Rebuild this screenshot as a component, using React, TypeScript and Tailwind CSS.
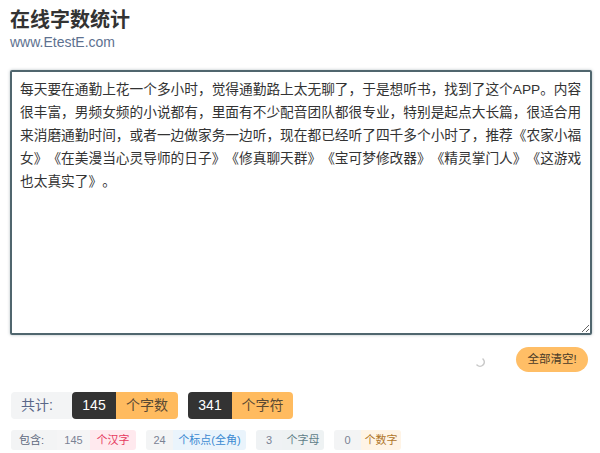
import React from "react";

const text =
  "每天要在通勤上花一个多小时，觉得通勤路上太无聊了，于是想听书，找到了这个APP。内容很丰富，男频女频的小说都有，里面有不少配音团队都很专业，特别是起点大长篇，很适合用来消磨通勤时间，或者一边做家务一边听，现在都已经听了四千多个小时了，推荐《农家小福女》《在美漫当心灵导师的日子》《修真聊天群》《宝可梦修改器》《精灵掌门人》《这游戏也太真实了》。";

export default function App() {
  return (
    <div
      className="w-[600px] h-[453px] bg-white overflow-hidden [text-spacing-trim:space-all]"
      style={{ fontFamily: '"Liberation Sans", "Noto Sans CJK SC", sans-serif' }}
    >
      <div className="pl-[10px] pt-[6px]">
        <h1 className="text-[20px] leading-[28px] font-bold text-[#333]">在线字数统计</h1>
        <div className="text-[14px] leading-[16px] text-[#5d7190]">www.EtestE.com</div>
      </div>
      <div className="pl-[10px] pr-[8px] mt-[20px]">
        <textarea
          className="block w-[582px] h-[265px] border-2 border-[#50666e] rounded-[2px] px-[8px] py-[6px] text-[13.7px] leading-[23px] text-[#333] resize-y shadow-[0_0_3px_rgba(80,102,110,0.45)] outline-none [text-spacing-trim:space-all]"
          defaultValue={text}
        />
      </div>
      <div className="flex items-center justify-end gap-[30px] pr-[12px] mt-[12px]">
        <svg width="12" height="12" viewBox="0 0 12 12" className="mt-[4px]">
          <path d="M9 3 A4 4 0 0 1 3 9" fill="none" stroke="#c8c8c8" strokeWidth="1.6" strokeLinecap="round" />
        </svg>
        <button className="h-[25px] w-[72px] rounded-full bg-[#ffbe66] text-[11.5px] text-[#4a3b28]">
          全部清空!
        </button>
      </div>
      <div className="flex items-center gap-[10px] pl-[11px] mt-[20px] h-[27px] text-[14px]">
        <div className="h-full flex items-center px-[10px] w-[61px] bg-[#f3f4f5] rounded-l-[4px] text-[#5a6888]">共计:</div>
        <div className="flex h-full -ml-[10px] rounded-[4px] overflow-hidden">
          <div className="w-[44px] flex items-center justify-center bg-[#333] text-white">145</div>
          <div className="w-[62px] flex items-center justify-center bg-[#ffbb5f] text-[#5b4a33]">个字数</div>
        </div>
        <div className="flex h-full rounded-[4px] overflow-hidden">
          <div className="w-[44px] flex items-center justify-center bg-[#333] text-white">341</div>
          <div className="w-[61px] flex items-center justify-center bg-[#ffbb5f] text-[#5b4a33]">个字符</div>
        </div>
      </div>
      <div className="flex items-center gap-[10px] pl-[11px] mt-[11px] h-[20px] text-[11px]">
        <div className="flex h-full rounded-[3px] overflow-hidden">
          <div className="w-[46px] flex items-center pl-[8px] bg-[#f3f4f5] text-[#606a80]">包含:</div>
          <div className="w-[33px] flex items-center justify-center bg-[#f5f5f6] text-[#7a8294]">145</div>
          <div className="w-[46px] flex items-center justify-center bg-[#ffe9ee] text-[#e63a5e]">个汉字</div>
        </div>
        <div className="flex h-full rounded-[3px] overflow-hidden">
          <div className="w-[27px] flex items-center justify-center bg-[#f3f4f5] text-[#7a8294]">24</div>
          <div className="w-[73px] flex items-center justify-center bg-[#eaf4fc] text-[#3b8ad2]">个标点(全角)</div>
        </div>
        <div className="flex h-full rounded-[3px] overflow-hidden">
          <div className="w-[26px] flex items-center justify-center bg-[#eff2f4] text-[#7a8294]">3</div>
          <div className="w-[42px] flex items-center justify-center bg-[#eef2f3] text-[#5e7e88]">个字母</div>
        </div>
        <div className="flex h-full rounded-[3px] overflow-hidden">
          <div className="w-[27px] flex items-center justify-center bg-[#f3f4f5] text-[#7a8294]">0</div>
          <div className="w-[40px] flex items-center justify-center bg-[#fff4e6] text-[#b0762a]">个数字</div>
        </div>
      </div>
    </div>
  );
}
